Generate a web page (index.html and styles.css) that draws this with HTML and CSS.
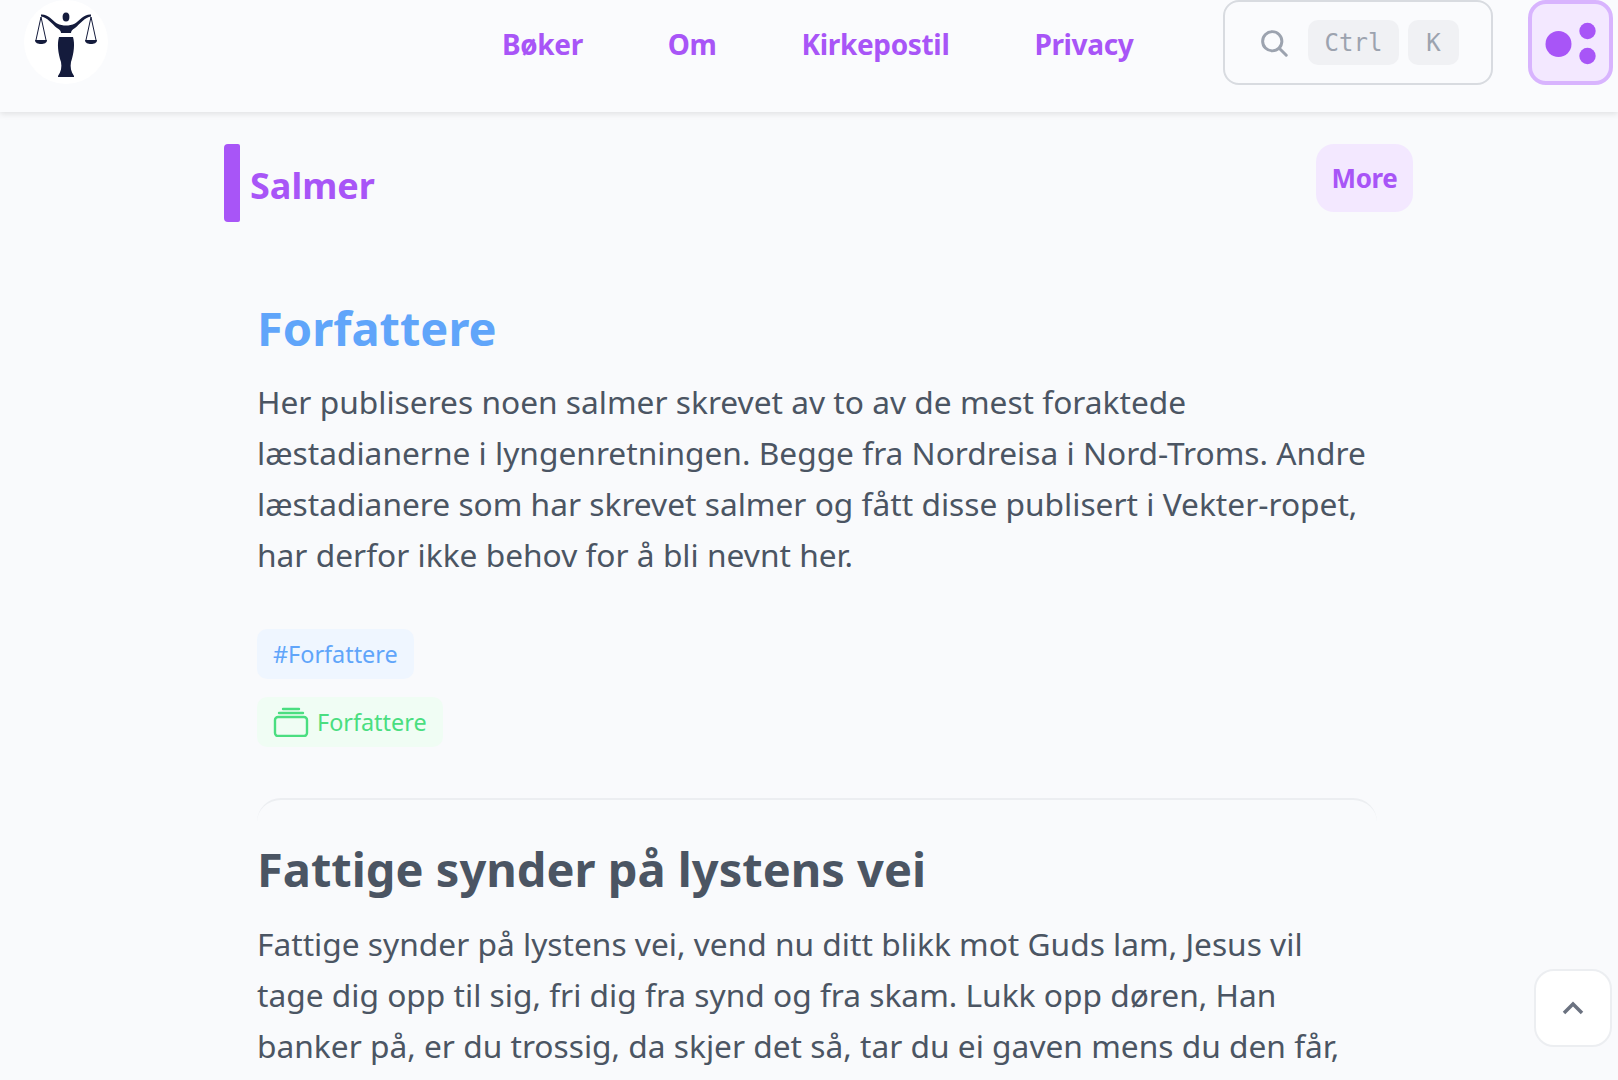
FILE: index.html
```html
<html>
    <head>
        <meta charset="utf-8">
        <link rel="stylesheet" href="styles.css">
        <title>Salmer</title>
    </head>
    <body>
        <header class="topbar">
            <a href="#" class="logo">
                <svg width="84" height="84" viewBox="0 0 84 84">
                    <circle cx="42" cy="42" r="42" fill="#ffffff"/>
                    <g fill="#141b3c">
                        <ellipse cx="42" cy="17" rx="3.400" ry="4.600"/>
                        <path d="M17 14.500 C24 14 28 20 33 23.500 C36 25 39 25.500 42 25.500 C45 25.500 48 25 51 23.500 C56 20 60 14 67 14.500 L67 16.500 C61 17 56 24 51 28 C48 30 47 31 47 33 L37 33 C37 31 36 30 33 28 C28 24 23 17 17 16.500 Z"/>
                        <path d="M35 37 L49 37 C51 44 50 53 47 62 C46 67 47 72 50 76 L50 77 L34 77 L34 76 C37 72 38 67 37 62 C34 53 33 44 35 37 Z"/>
                        <path d="M11 40 L23 40 C23 43 20 44 17 44 C14 44 11 43 11 40 Z"/>
                        <path d="M61 40 L73 40 C73 43 70 44 67 44 C64 44 61 43 61 40 Z"/>
                    </g>
                    <g fill="none" stroke="#141b3c" stroke-width="1">
                        <path d="M17 17 L12 40 M17 17 L22 40"/>
                        <path d="M67 17 L62 40 M67 17 L72 40"/>
                    </g>
                </svg>
            </a>
            <nav class="menu">
                <a href="#">Bøker</a>
                <a href="#">Om</a>
                <a href="#">Kirkepostil</a>
                <a href="#">Privacy</a>
            </nav>
            <div class="search">
                <svg width="28" height="28" viewBox="0 0 32 32" fill="none" stroke="#9ca3af" stroke-width="3.400" stroke-linecap="round">
                    <circle cx="14" cy="14" r="11"/>
                    <path d="M22 22 L30 30"/>
                </svg>
                <kbd class="key key-ctrl">Ctrl</kbd>
                <kbd class="key key-k">K</kbd>
            </div>
            <button class="appearance">
                <svg width="56" height="44" viewBox="0 0 56 44" fill="#a855f7">
                    <circle cx="15.500" cy="23" r="13"/>
                    <circle cx="44.500" cy="10" r="8.200"/>
                    <circle cx="44.500" cy="35" r="8.200"/>
                </svg>
            </button>
        </header>

        <main class="content">
            <div class="section-head">
                <div class="section-title">
                    <span class="bar"></span>
                    <h1>Salmer</h1>
                </div>
                <a href="#" class="more">More</a>
            </div>

            <article class="post first">
                <h2 class="blue">Forfattere</h2>
                <p>Her publiseres noen salmer skrevet av to av de mest foraktede<br>
                læstadianerne i lyngenretningen. Begge fra Nordreisa i Nord-Troms. Andre<br>
                læstadianere som har skrevet salmer og fått disse publisert i Vekter-ropet,<br>
                har derfor ikke behov for å bli nevnt her.</p>
                <div class="tags">
                    <a href="#" class="tag tag-blue">#Forfattere</a>
                    <a href="#" class="tag tag-green">
                        <svg width="36" height="30" viewBox="0 0 36 30" fill="none" stroke="#4ade80" stroke-width="2.400" stroke-linecap="round">
                            <path d="M10 2 L26 2"/>
                            <path d="M6 6 L30 6"/>
                            <rect x="2" y="10" width="32" height="19" rx="3"/>
                        </svg>
                        Forfattere
                    </a>
                </div>
            </article>

            <article class="post">
                <h2>Fattige synder på lystens vei</h2>
                <p>Fattige synder på lystens vei, vend nu ditt blikk mot Guds lam, Jesus vil<br>
                tage dig opp til sig, fri dig fra synd og fra skam. Lukk opp døren, Han<br>
                banker på, er du trossig, da skjer det så, tar du ei gaven mens du den får,</p>
            </article>
        </main>

        <button class="to-top">
            <svg width="22" height="14" viewBox="0 0 22 14" fill="none" stroke="#6b7280" stroke-width="3.500">
                <path d="M2 12 L11 3 L20 12"/>
            </svg>
        </button>
    </body>
</html>
```

FILE: styles.css
```css
html, body {
    margin: 0;
    height: 1080px;
    overflow: hidden;
}
body {
    background-color: #f9fafc;
    font-family: "Noto Sans", "Open Sans", sans-serif;
    color: #4b5563;
}
a {
    text-decoration: none;
}
.topbar {
    height: 112px;
    box-sizing: border-box;
    display: flex;
    align-items: flex-start;
    padding: 0 5px 0 24px;
    background-color: #fafbfd;
    box-shadow: 0 2px 6px rgba(0, 0, 0, 0.1);
}
.logo {
    display: block;
    height: 84px;
    margin-right: 394px;
}
.menu {
    display: flex;
    flex: 1;
    gap: 85px;
    height: 88px;
    align-items: center;
    font-size: 28px;
    font-weight: 700;
    letter-spacing: -0.35px;
}
.menu a {
    color: #a855f7;
}
.search {
    width: 270px;
    height: 85px;
    box-sizing: border-box;
    border: 2px solid #d8dbe0;
    border-radius: 16px;
    display: flex;
    align-items: center;
    padding-left: 35px;
    margin-right: 35px;
}
.key {
    background-color: #f0f1f4;
    border-radius: 10px;
    font-family: "DejaVu Sans Mono", "Liberation Mono", monospace;
    font-size: 24px;
    color: #9ca3af;
    height: 45px;
    line-height: 47px;
    text-align: center;
}
.key-ctrl {
    width: 91px;
    margin-left: 20px;
}
.key-k {
    width: 51px;
    margin-left: 9px;
}
.appearance {
    width: 85px;
    height: 85px;
    box-sizing: border-box;
    padding: 0;
    background-color: #f3e8ff;
    border: 4px solid #d8b4fe;
    border-radius: 18px;
    display: flex;
    align-items: center;
    justify-content: center;
}
.content {
    width: 1189px;
    margin-left: 224px;
}
.section-head {
    display: flex;
    justify-content: space-between;
    align-items: flex-start;
    padding-top: 32px;
}
.section-title {
    display: flex;
    align-items: center;
    gap: 10px;
}
.bar {
    width: 16px;
    height: 78px;
    background-color: #a855f7;
    border-radius: 4px 2px 2px 4px;
}
.section-title h1 {
    margin: 4px 0 0;
    font-size: 36px;
    font-weight: 700;
    color: #a855f7;
}
.more {
    width: 97px;
    height: 68px;
    line-height: 68px;
    text-align: center;
    background-color: #f3e8ff;
    border-radius: 18px;
    font-size: 26px;
    font-weight: 700;
    letter-spacing: -0.4px;
    color: #a855f7;
}
.post {
    margin-left: 33px;
    width: 1120px;
}
.post.first {
    padding-top: 73px;
}
.post h2 {
    margin: 0;
    font-size: 47px;
    line-height: 66px;
    font-weight: 700;
}
.post h2.blue {
    color: #60a5fa;
}
.post p {
    margin: 15px 0 0;
    font-size: 31.7px;
    line-height: 51px;
    white-space: nowrap;
}
.tags {
    display: flex;
    flex-direction: column;
    align-items: flex-start;
    gap: 18px;
    margin-top: 49px;
}
.tag {
    height: 50px;
    box-sizing: border-box;
    padding: 0 16px;
    border-radius: 10px;
    font-size: 23.4px;
    display: flex;
    align-items: center;
    gap: 8px;
}
.tag-blue {
    background-color: #eff6ff;
    color: #60a5fa;
}
.tag-green {
    background-color: #f0fdf4;
    color: #4ade80;
}
.post + .post {
    margin-top: 51px;
    padding-top: 36px;
    border-top: 2px solid #eceef1;
    border-radius: 24px 24px 0 0;
}
.post + .post p {
    margin-top: 16px;
}
.to-top {
    position: fixed;
    left: 1534px;
    top: 969px;
    width: 78px;
    height: 78px;
    padding: 0;
    background-color: #ffffff;
    border: 2px solid #eceef1;
    border-radius: 20px;
}
```
